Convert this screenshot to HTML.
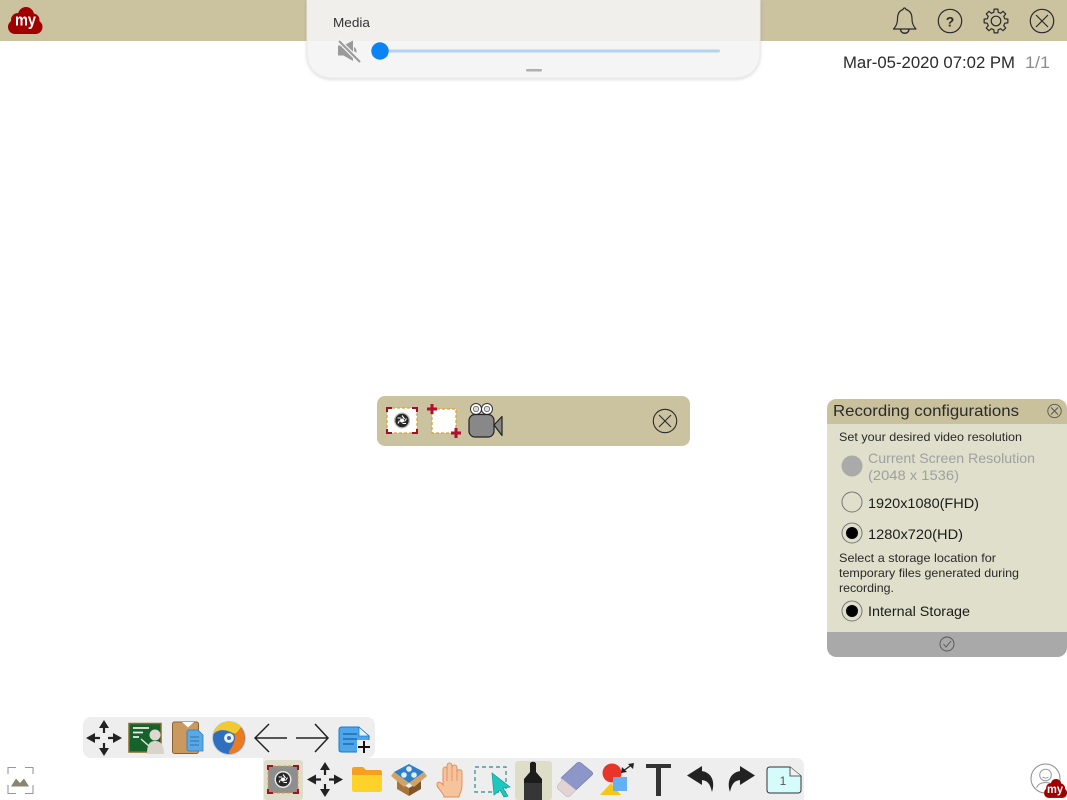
<!DOCTYPE html>
<html><head><meta charset="utf-8"><title>Recording</title>
<style>
html,body{margin:0;padding:0;background:#fff;width:1067px;height:800px;overflow:hidden}
svg{position:absolute;left:0;top:0;display:block}
text{font-family:"Liberation Sans",sans-serif}
</style></head><body>
<svg width="1067" height="800" viewBox="0 0 1067 800" xmlns="http://www.w3.org/2000/svg">
<rect width="1067" height="800" fill="#fff"/>
<!-- top bar -->
<rect width="1067" height="41" fill="#cbc29f"/>
<!-- my logo -->
<g fill="#a00000">
<circle cx="15" cy="27" r="7"/><circle cx="18" cy="20" r="7"/><circle cx="26" cy="15" r="8"/><circle cx="33" cy="20" r="6.500"/><circle cx="35.500" cy="27" r="7"/><rect x="15" y="18" width="21" height="16"/>
</g>
<text x="15" y="25.500" font-size="17" font-weight="700" fill="#fff" textLength="21" lengthAdjust="spacingAndGlyphs">my</text>
<!-- top right icons -->
<g fill="none" stroke="#2b2b2b" stroke-width="1.200" stroke-linejoin="round">
<path d="M893.500 29C896.500 26 897.500 23 897.500 19C897.500 13 900 10.500 903 9.500C903.500 7.500 905.500 7.500 906 9.500C909.500 10.500 912 13 912 19C912 23 913 26 916 29Z"/>
<path d="M900.500 29.500C901 34.500 908.500 34.500 909 29.500" stroke-width="1.400"/>
<circle cx="950" cy="21" r="11.700"/>
<circle cx="1042" cy="21" r="11.700"/>
<path d="M1036 15L1048 27M1048 15L1036 27"/>
<circle cx="996" cy="21" r="4.800"/>
<path id="t" d="M992.560 12.690L993.820 12.270L994.120 9.150H997.880L998.180 12.270L999.440 12.690"/>
<path transform="rotate(45 996 21)" d="M992.560 12.690L993.820 12.270L994.120 9.150H997.880L998.180 12.270L999.440 12.690"/>
<path transform="rotate(90 996 21)" d="M992.560 12.690L993.820 12.270L994.120 9.150H997.880L998.180 12.270L999.440 12.690"/>
<path transform="rotate(135 996 21)" d="M992.560 12.690L993.820 12.270L994.120 9.150H997.880L998.180 12.270L999.440 12.690"/>
<path transform="rotate(180 996 21)" d="M992.560 12.690L993.820 12.270L994.120 9.150H997.880L998.180 12.270L999.440 12.690"/>
<path transform="rotate(225 996 21)" d="M992.560 12.690L993.820 12.270L994.120 9.150H997.880L998.180 12.270L999.440 12.690"/>
<path transform="rotate(270 996 21)" d="M992.560 12.690L993.820 12.270L994.120 9.150H997.880L998.180 12.270L999.440 12.690"/>
<path transform="rotate(315 996 21)" d="M992.560 12.690L993.820 12.270L994.120 9.150H997.880L998.180 12.270L999.440 12.690"/>
</g>
<text x="950" y="26.500" font-size="14" font-weight="700" fill="#2b2b2b" text-anchor="middle">?</text>
<!-- media panel -->
<path d="M307 0H760V53C760 68 750 78 735 78H332C317 78 307 68 307 53Z" fill="#f5f5f5" stroke="#eaeaea" stroke-width="1" style="filter:drop-shadow(0 1px 1.500px rgba(0,0,0,.14))"/>
<rect x="307.500" y="0" width="452" height="41" fill="#f1efeb"/>
<text x="333" y="27" font-size="13" fill="#333" textLength="37" lengthAdjust="spacingAndGlyphs">Media</text>
<path d="M338 45.500H343.500L353 40.500V61L343.500 55.500H338Z" fill="#9a9a9a"/>
<path d="M354 47C356 48 356.500 50 356.500 53L354 51Z" fill="#9a9a9a"/>
<path d="M338 40L361 63" stroke="#f5f5f5" stroke-width="4.500"/>
<path d="M339 41L360 62" stroke="#9a9a9a" stroke-width="2"/>
<rect x="380" y="49.500" width="340" height="3" rx="1.500" fill="#b3d4ef"/>
<circle cx="380" cy="51" r="8.700" fill="#0a84f5"/>
<rect x="526" y="69" width="16" height="2.500" rx="1" fill="#b0b0b0"/>
<!-- date -->
<text x="843" y="68" font-size="16.500" fill="#2a2a2a" textLength="172" lengthAdjust="spacingAndGlyphs">Mar-05-2020 07:02 PM</text>
<text x="1025" y="68" font-size="16.500" fill="#8c8c8c" textLength="25" lengthAdjust="spacingAndGlyphs">1/1</text>

<!-- centre capture bar -->
<rect x="377" y="396" width="313" height="50" rx="8" fill="#cbc29f"/>
<rect x="387" y="408" width="30" height="25" fill="#fff" stroke="#e0a030" stroke-width="1.300" stroke-dasharray="3 2"/>
<path d="M387 412V408H392M412 408H417V412M417 429V433H412M392 433H387V429" fill="none" stroke="#a01028" stroke-width="2"/>
<circle cx="402" cy="420.500" r="8" fill="#bdbdbd"/>
<circle cx="402" cy="420.500" r="6.700" fill="#262626"/>
<path d="M402 415.500L404.500 419M406.500 418.500L404.500 421.500M406 423.500L402.500 423.500M398 423.500L399.500 420.500M397.500 418L401 418" stroke="#fff" stroke-width="1.100" fill="none"/>
<circle cx="402" cy="420.500" r="2" fill="#fff"/>
<rect x="432" y="409" width="24" height="24" fill="#fff" stroke="#e0a030" stroke-width="1.300" stroke-dasharray="3 2"/>
<path d="M432 404V414M427 409H437M456 428V438M451 433H461" stroke="#b01030" stroke-width="3" fill="none"/>
<circle cx="476" cy="409" r="5.500" fill="#fff" stroke="#333"/>
<circle cx="476" cy="409" r="2.700" fill="#ddd" stroke="#666" stroke-width=".8"/>
<circle cx="487" cy="409" r="5.500" fill="#fff" stroke="#333"/>
<circle cx="487" cy="409" r="2.700" fill="#ddd" stroke="#666" stroke-width=".8"/>
<rect x="469" y="414.500" width="25" height="22.500" rx="6" fill="#888" stroke="#222" stroke-width="1.200"/>
<path d="M494 425L502 416.500V435.500Z" fill="#888" stroke="#222" stroke-width="1.200" stroke-linejoin="round"/>
<circle cx="665" cy="421" r="11.700" fill="none" stroke="#2b2b2b" stroke-width="1.100"/>
<path d="M659 415L671 427M671 415L659 427" stroke="#2b2b2b" stroke-width="1.100"/>

<!-- recording configurations -->
<path d="M837 399H1057C1063 399 1067 403 1067 409V647C1067 653 1063 657 1057 657H837C831 657 827 653 827 647V409C827 403 831 399 837 399Z" fill="#dfdfcb"/>
<path d="M837 399H1057C1063 399 1067 403 1067 409V424H827V409C827 403 831 399 837 399Z" fill="#c9c09c"/>
<path d="M827 632H1067V647C1067 653 1063 657 1057 657H837C831 657 827 653 827 647Z" fill="#a9a9a9"/>
<text x="833" y="416" font-size="16" fill="#2a2a2a" textLength="186" lengthAdjust="spacingAndGlyphs">Recording configurations</text>
<circle cx="1054.500" cy="411" r="6.700" fill="none" stroke="#555" stroke-width=".9"/>
<path d="M1051 407.500L1058 414.500M1058 407.500L1051 414.500" stroke="#555" stroke-width=".9"/>
<text x="839" y="441" font-size="12" fill="#2a2a2a" textLength="183" lengthAdjust="spacingAndGlyphs">Set your desired video resolution</text>
<circle cx="852" cy="466" r="10.500" fill="#aaaaaa"/>
<text x="868" y="463" font-size="14" fill="#a0a0a0" textLength="167" lengthAdjust="spacingAndGlyphs">Current Screen Resolution</text>
<text x="868" y="480" font-size="14" fill="#a0a0a0" textLength="91" lengthAdjust="spacingAndGlyphs">(2048 x 1536)</text>
<circle cx="852" cy="502" r="10" fill="none" stroke="#777" stroke-width="1"/>
<text x="868" y="508" font-size="14" fill="#1a1a1a" textLength="111" lengthAdjust="spacingAndGlyphs">1920x1080(FHD)</text>
<circle cx="852" cy="533" r="10" fill="none" stroke="#777" stroke-width="1"/>
<circle cx="852" cy="533" r="6" fill="#000"/>
<text x="868" y="539" font-size="14" fill="#1a1a1a" textLength="95" lengthAdjust="spacingAndGlyphs">1280x720(HD)</text>
<text x="839" y="562" font-size="12" fill="#2a2a2a" textLength="157" lengthAdjust="spacingAndGlyphs">Select a storage location for</text>
<text x="839" y="577" font-size="12" fill="#2a2a2a" textLength="180" lengthAdjust="spacingAndGlyphs">temporary files generated during</text>
<text x="839" y="592" font-size="12" fill="#2a2a2a" textLength="55" lengthAdjust="spacingAndGlyphs">recording.</text>
<circle cx="852" cy="611" r="10" fill="none" stroke="#777" stroke-width="1"/>
<circle cx="852" cy="611" r="6" fill="#000"/>
<text x="868" y="616" font-size="14" fill="#1a1a1a" textLength="102" lengthAdjust="spacingAndGlyphs">Internal Storage</text>
<circle cx="947" cy="644" r="7" fill="none" stroke="#555" stroke-width=".9"/>
<path d="M943.500 644L946 647L951 641" fill="none" stroke="#555" stroke-width=".9"/>

<!-- secondary toolbar -->
<rect x="83" y="717" width="292" height="41" rx="8" fill="#eeeeee"/>
<path d="M104 726V733M104 743V750M94 738H100M108 738H114" stroke="#222" stroke-width="2.200" fill="none"/>
<path d="M104 720L99 728H109ZM104 756L99 748H109ZM86 738L95 733V743ZM122 738L113 733V743Z" fill="#222"/>
<rect x="129" y="723.500" width="32" height="28.500" fill="#15622a" stroke="#8a6a30" stroke-width="1.500"/>
<path d="M133 728H149M133 732.500H143M133 737H139" stroke="#e8f0e8" stroke-width="1.700"/>
<path d="M141 739L150 747" stroke="#e6e0d6" stroke-width="1.500"/>
<circle cx="155" cy="735" r="5.500" fill="#ddd8d0"/>
<path d="M147 754C147 744 150 741 155 741C161 741 164 745 164 754Z" fill="#d9d3ca"/>
<rect x="172.500" y="722" width="26" height="31.500" rx="2" fill="#c9995f" stroke="#8a6232"/>
<path d="M182 722L188 727.500L194 722Z" fill="#fff"/>
<path d="M189 730H198L203 735V751H189C187.500 751 187 750 187 749V732C187 731 188 730 189 730Z" fill="#5aa9e6" stroke="#2f7fbf" stroke-width=".8"/>
<path d="M190 737H199M190 741H199M190 745H199" stroke="#2f73ad" stroke-width="1"/>
<circle cx="229" cy="738" r="17" fill="#b8cedd"/>
<circle cx="229" cy="738" r="16" fill="#2f6fc0"/>
<path d="M238 725A16 16 0 0 1 230 754C226 752 234 748 234 740C234 735 234 730 238 725Z" fill="#ee7a1f"/>
<path d="M213.500 734A16 16 0 0 1 241 727C238 731 236 735 232 733C226 729 218 729 213.500 734Z" fill="#f2c92e"/>
<circle cx="229" cy="738" r="5.500" fill="#eef2f5" stroke="#2f6fc0" stroke-width="1.200"/>
<circle cx="229" cy="738" r="2" fill="#2f6fc0"/>
<g fill="none" stroke="#222" stroke-width="1.500">
<path d="M287 738H255M269 724L255 738L269 752"/>
<path d="M296 738H328M315 724L328 738L315 752"/>
</g>
<path d="M342 727H358L369 736V750C369 751 368 752 367 752H342C340 752 339 751 339 750V730C339 728 340 727 342 727Z" fill="#4da6ec" stroke="#1f78c8" stroke-width="1"/>
<path d="M343 734H357M343 739H357M343 744H354" stroke="#155fa5" stroke-width="1.200"/>
<path d="M359 727V736H369Z" fill="#e8f4fc" stroke="#1f78c8" stroke-width=".8"/>
<rect x="357" y="740" width="14" height="14" fill="#eeeeee"/>
<path d="M364 741V753M358 747H370" stroke="#111" stroke-width="2"/>

<!-- bottom toolbar -->
<path d="M263 758H796C801 758 804 761 804 766V800H263Z" fill="#eeeeee"/>
<rect x="264" y="760" width="39" height="40" rx="3" fill="#e0dcca"/>
<rect x="268" y="766" width="30" height="27" fill="#8e8e8e" stroke="#d8a030" stroke-width="1" stroke-dasharray="3 2"/>
<path d="M268 770V766H273M293 766H298V770M298 789V793H293M273 793H268V789" fill="none" stroke="#a01028" stroke-width="2"/>
<circle cx="283" cy="779.500" r="8.500" fill="#e8e8e8"/>
<circle cx="283" cy="779.500" r="7" fill="#262626"/>
<path d="M283 774.500L285.500 778M287.500 777.500L285.500 780.500M287 782.500L283.500 782.500M279 782.500L280.500 779.500M278.500 777L282 777" stroke="#fff" stroke-width="1.100" fill="none"/>
<circle cx="283" cy="779.500" r="2" fill="#fff"/>
<path d="M325 768V775M325 784V791M315 779.500H321M329 779.500H335" stroke="#222" stroke-width="2.200"/>
<path d="M325 762L320 770H330ZM325 797L320 789H330ZM307 779.500L316 774.500V784.500ZM343 779.500L334 774.500V784.500Z" fill="#222"/>
<path d="M352 769C352 768 353 767 354 767H363L366 770H380C381 770 382 771 382 772V778H352Z" fill="#f5a020"/>
<path d="M352 775H382V790C382 791 381 792 380 792H354C353 792 352 791 352 790Z" fill="#fdd32a"/>
<path d="M397 781L409 788V796L397 789Z" fill="#a8743c"/>
<path d="M421 781L409 788V796L421 789Z" fill="#7f5428"/>
<path d="M409 764L424 772L409 783L394 772Z" fill="#2d80c8"/>
<path d="M394 772L391 776L404 787L409 783ZM424 772L427 776L414 787L409 783Z" fill="#d0a468"/>
<circle cx="404" cy="775" r="2.800" fill="#dfeefa"/>
<circle cx="414" cy="775" r="2.800" fill="#dfeefa"/>
<circle cx="409" cy="769" r="2.800" fill="#dfeefa"/>
<path d="M444 796C441 790 436 787 437 784C438 781 441 782 443 785V770C443 766 447 766 447 770V766C447 762 452 762 452 766V768C452 764 457 764 457 768V772C457 769 462 769 462 772V785C462 790 460 793 459 797H444Z" fill="#f5c49c" stroke="#e09060" stroke-width="1"/>
<path d="M447 769V781M452 767V781M457 770V781" stroke="#e09060" stroke-width=".9"/>
<rect x="475" y="767" width="31" height="25" fill="none" stroke="#4a9a9a" stroke-width="1.400" stroke-dasharray="4 3"/>
<path d="M492 773L510 787L503 788L508 796L504 797L500 790L494 795Z" fill="#1cc8c0" stroke="#0a9a96" stroke-width=".7"/>
<rect x="515" y="761" width="37" height="39" rx="3" fill="#dedec8"/>
<path d="M530 764C530 761 536 761 536 764V772L542 779V800H524V779L530 772Z" fill="#1c1c1c"/>
<path d="M524 783H542V800H524Z" fill="#363636"/>
<path d="M577 763C578 762 580 762 581 763L592 772C593 773 593 774 592 775L576 790L561 778Z" fill="#8d96c8" stroke="#6f78a8" stroke-width=".6"/>
<path d="M561 778L576 790L570 796C569 797 567 797 566 796L558 789C557 788 557 786 558 785L562 780Z" fill="#e2d4d4" stroke="#bbb" stroke-width=".6"/>
<circle cx="612" cy="773" r="9.500" fill="#e8352b"/>
<path d="M611 783L600 795H621Z" fill="#f5c518"/>
<rect x="613" y="777" width="14" height="14" fill="#63b0f4"/>
<path d="M623 771L633 764" stroke="#222" stroke-width="1.300"/>
<path d="M634 763L628 764L633 769ZM621 773L627 772L622 767Z" fill="#222"/>
<path d="M646 766H671" stroke="#333" stroke-width="4"/>
<path d="M658.500 766V796" stroke="#333" stroke-width="5"/>
<path d="M700 771C710 771 716 780 712 792C710 783 707 780 700 780Z" fill="#222"/>
<path d="M687 775.500L702 766V785Z" fill="#222"/>
<path d="M742 771C732 771 726 780 730 792C732 783 735 780 742 780Z" fill="#222"/>
<path d="M755 775.500L740 766V785Z" fill="#222"/>
<path d="M770 767H790L801 776V790C801 792 800 793 798 793H770C768 793 767 792 767 790V770C767 768 768 767 770 767Z" fill="#d5fbfb" stroke="#333" stroke-width="1"/>
<path d="M790 767V776H801" fill="#f0f0f0" stroke="#333" stroke-width=".8"/>
<text x="783" y="785" font-size="12" fill="#555" text-anchor="middle">1</text>

<!-- bottom-left image icon -->
<path d="M8 774V767.500H16M25 767.500H33V774M33 785V793.500H25M16 793.500H8V785" fill="none" stroke="#999" stroke-width="1.100"/>
<path d="M11 786.500L16 778.500L20 783L24 778.500L29 786.500Z" fill="#8a8570"/>
<!-- bottom-right user icon -->
<circle cx="1045.500" cy="778.500" r="14.500" fill="#fff" stroke="#8a8a8a" stroke-width="1"/>
<circle cx="1045.500" cy="775" r="5.800" fill="none" stroke="#999" stroke-width="1"/>
<path d="M1042.500 777C1044.500 778.500 1046.500 778.500 1048.500 777M1036.500 788C1038 784 1041 782.500 1045.500 782.500C1050 782.500 1053 784 1054.500 788" fill="none" stroke="#999" stroke-width="1"/>
<g fill="#a00000" transform="translate(1038.700 774.100) scale(.667 .7)">
<circle cx="15" cy="27" r="7"/><circle cx="18" cy="20" r="7"/><circle cx="26" cy="15" r="8"/><circle cx="33" cy="20" r="6.500"/><circle cx="35.500" cy="27" r="7"/><rect x="15" y="18" width="21" height="16"/>
</g>
<text x="1047" y="793" font-size="12" font-weight="700" fill="#fff" textLength="16" lengthAdjust="spacingAndGlyphs">my</text>
</svg>
</body></html>
